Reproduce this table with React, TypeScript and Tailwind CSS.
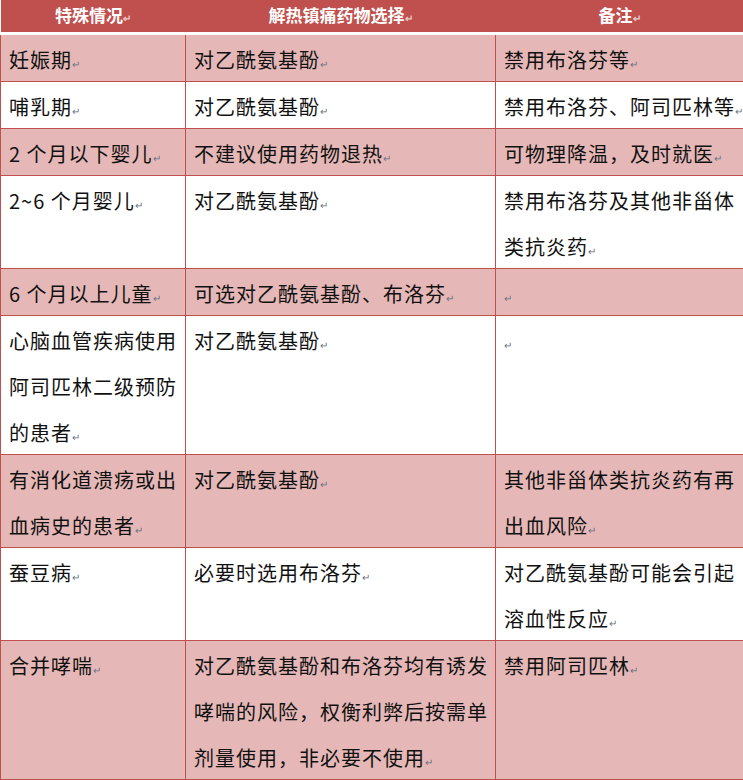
const rows: { pink: boolean; cells: string[][] }[] = [
  { pink: true, cells: [["妊娠期"], ["对乙酰氨基酚"], ["禁用布洛芬等"]] },
  { pink: false, cells: [["哺乳期"], ["对乙酰氨基酚"], ["禁用布洛芬、阿司匹林等"]] },
  { pink: true, cells: [["2 个月以下婴儿"], ["不建议使用药物退热"], ["可物理降温，及时就医"]] },
  {
    pink: false,
    cells: [["2~6 个月婴儿"], ["对乙酰氨基酚"], ["禁用布洛芬及其他非甾体", "类抗炎药"]],
  },
  { pink: true, cells: [["6 个月以上儿童"], ["可选对乙酰氨基酚、布洛芬"], [""]] },
  {
    pink: false,
    cells: [["心脑血管疾病使用", "阿司匹林二级预防", "的患者"], ["对乙酰氨基酚"], [""]],
  },
  {
    pink: true,
    cells: [["有消化道溃疡或出", "血病史的患者"], ["对乙酰氨基酚"], ["其他非甾体类抗炎药有再", "出血风险"]],
  },
  {
    pink: false,
    cells: [["蚕豆病"], ["必要时选用布洛芬"], ["对乙酰氨基酚可能会引起", "溶血性反应"]],
  },
  {
    pink: true,
    cells: [
      ["合并哮喘"],
      ["对乙酰氨基酚和布洛芬均有诱发", "哮喘的风险，权衡利弊后按需单", "剂量使用，非必要不使用"],
      ["禁用阿司匹林"],
    ],
  },
];

function Mark({ light }: { light?: boolean }) {
  return (
    <span className={`text-[10px] tracking-normal ${light ? "text-[#e8c8c7]" : "text-gray-500"}`}>↵</span>
  );
}

export default function App() {
  return (
    <div className="w-[743px] h-[780px] overflow-hidden bg-white font-['Noto_Sans_CJK_SC',sans-serif] text-[#111]">
      <table className="w-[743px] border-collapse table-fixed">
        <colgroup>
          <col className="w-[185px]" />
          <col className="w-[310px]" />
          <col className="w-[248px]" />
        </colgroup>
        <thead>
          <tr className="bg-[#c0504d] text-white">
            {["特殊情况", "解热镇痛药物选择", "备注"].map((h) => (
              <th
                key={h}
                className="h-[29px] p-0 text-center text-[17px] font-bold leading-[29px] border-b-[3px] border-b-white"
              >
                {h}
                <Mark light />
              </th>
            ))}
          </tr>
        </thead>
        <tbody>
          {rows.map((r, i) => (
            <tr key={i} className={r.pink ? "bg-[#e5b8b7]" : "bg-white"}>
              {r.cells.map((lines, j) => (
                <td
                  key={j}
                  className="border border-[#c0504d] px-2 py-0 align-top text-[20px] tracking-[1px]"
                >
                  {lines.map((l, k) => (
                    <div key={k} className="whitespace-nowrap h-[46px] leading-[50px]">
                      {l}
                      {k === lines.length - 1 && <Mark />}
                    </div>
                  ))}
                </td>
              ))}
            </tr>
          ))}
        </tbody>
      </table>
    </div>
  );
}
